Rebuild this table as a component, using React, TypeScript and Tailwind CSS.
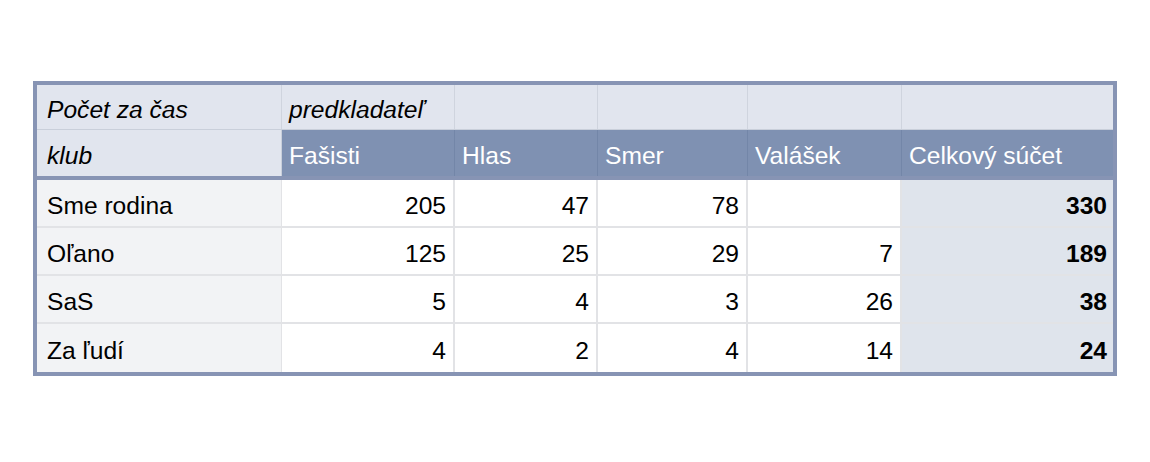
import React from 'react';

const cols = ['w-[245px]', 'w-[173px]', 'w-[143px]', 'w-[150px]', 'w-[154px]', 'flex-1'];

const rows = [
  { name: 'Sme rodina', vals: ['205', '47', '78', ''], total: '330' },
  { name: 'Oľano', vals: ['125', '25', '29', '7'], total: '189' },
  { name: 'SaS', vals: ['5', '4', '3', '26'], total: '38' },
  { name: 'Za ľudí', vals: ['4', '2', '4', '14'], total: '24' },
];

const heads = ['Fašisti', 'Hlas', 'Smer', 'Valášek', 'Celkový súčet'];

export default function App() {
  return (
    <div className="w-[1150px] h-[462px] bg-white pt-[81px] pl-[33px] text-[24.6px] text-black" style={{ fontFamily: '"Liberation Sans", Arial, sans-serif' }}>
      <div className="w-[1084px] border-4 border-[#8794b4]">
        {/* header row 1 */}
        <div className="flex h-[45px] bg-[#e1e5ee] border-b border-[#c9cfda]">
          <div className={`${cols[0]} flex items-center pt-[7px] pl-[10px] italic border-r border-[#cfd4de]`}>Počet za čas</div>
          <div className={`${cols[1]} flex items-center pt-[7px] pl-[7px] italic border-r border-[#cfd4de]`}>predkladateľ</div>
          <div className={`${cols[2]} border-r border-[#cfd4de]`} />
          <div className={`${cols[3]} border-r border-[#cfd4de]`} />
          <div className={`${cols[4]} border-r border-[#cfd4de]`} />
          <div className={cols[5]} />
        </div>
        {/* header row 2 */}
        <div className="flex h-[50px] border-b-4 border-[#8794b4]">
          <div className={`${cols[0]} flex items-center pt-[7px] pl-[10px] italic bg-[#e1e5ee] border-r border-[#c9cfda]`}>klub</div>
          {heads.map((h, i) => (
            <div
              key={h}
              className={`${cols[i + 1]} flex items-center pt-[7px] pl-[7px] bg-[#7f91b2] text-white ${i < 4 ? 'border-r border-[#7386a8]' : ''}`}
            >
              {h}
            </div>
          ))}
        </div>
        {/* data */}
        {rows.map((r, ri) => (
          <div key={r.name} className={`flex h-[48px] ${ri < rows.length - 1 ? 'border-b-2 border-[#e2e3e6]' : ''}`}>
            <div className={`${cols[0]} flex items-center pt-[7px] pl-[10px] bg-[#f2f3f5] border-r border-[#e2e3e6]`}>{r.name}</div>
            {r.vals.map((v, i) => (
              <div key={i} className={`${cols[i + 1]} flex items-center justify-end pt-[7px] pr-[7px] bg-white border-r-2 border-[#e2e3e6]`}>
                {v}
              </div>
            ))}
            <div className={`${cols[5]} flex items-center justify-end pt-[7px] pr-[6px] bg-[#dfe4ec] font-bold`}>{r.total}</div>
          </div>
        ))}
      </div>
    </div>
  );
}
